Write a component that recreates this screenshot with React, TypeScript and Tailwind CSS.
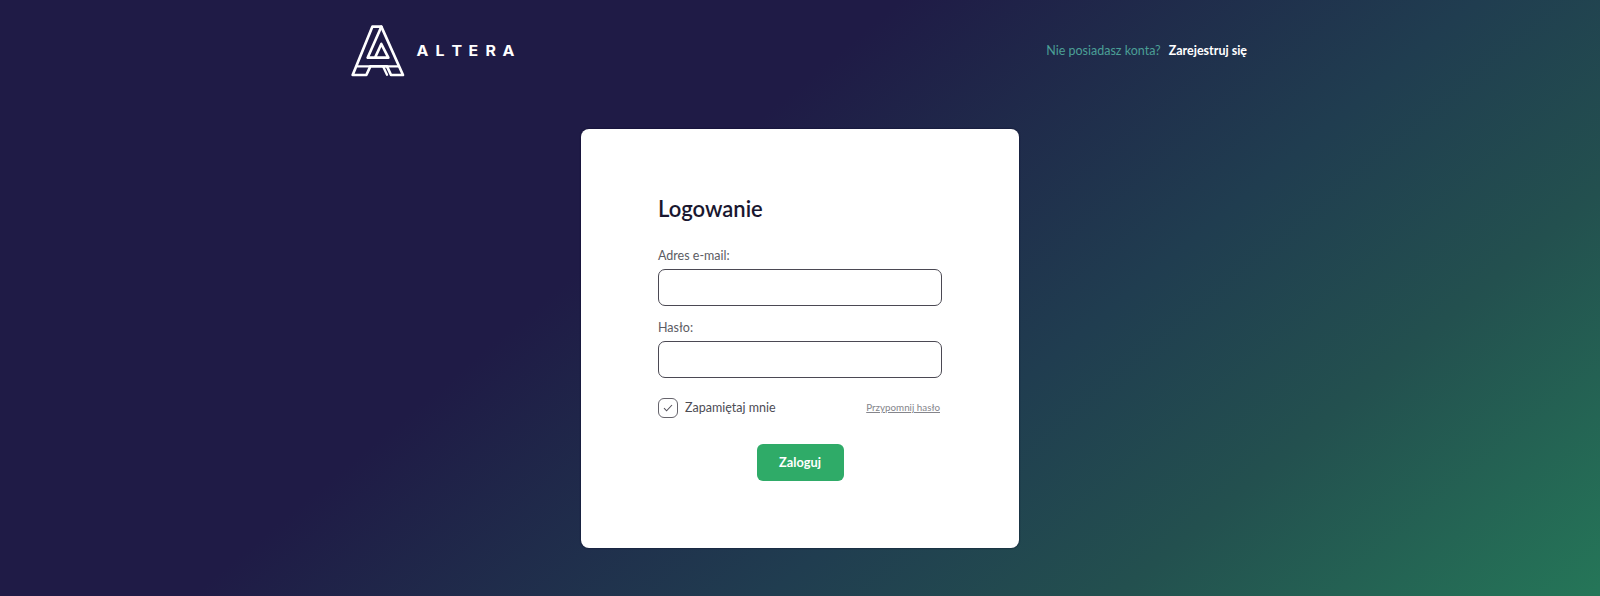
import { useState } from 'react';

function Logo() {
  return (
    <div className="flex items-center gap-3">
      <svg width="54" height="52" viewBox="16 14 162 156" fill="none" stroke="#fff" strokeWidth="8" strokeLinejoin="round" strokeLinecap="round">
        <path d="M80 19H107L172 164H136L124 138H74L62 164H21Z" />
        <path d="M107 19L66 112H128L107 71L89 110" />
        <path d="M74 138H36M112 138L124 163M124 138H158" strokeWidth="7" />
      </svg>
      <span className="flex w-[97px] justify-between font-['Inter','Lato',sans-serif] text-[14.5px] leading-5 font-bold text-white">
        {'ALTERA'.split('').map((letter, i) => (
          <span key={i} className="inline-block scale-x-110">{letter}</span>
        ))}
      </span>
    </div>
  );
}

function Field({ label, type }: { label: string; type: string }) {
  return (
    <label className="block h-[72px] text-[12.5px] leading-[18px] text-[#5c5c63]">
      <span className="block pt-px">{label}</span>
      <input type={type} className="mt-1 block h-[37px] w-full rounded-[7px] border border-[#4b4953] bg-white px-3 outline-none" />
    </label>
  );
}

export default function App() {
  const [remember, setRemember] = useState(true);
  return (
    <div className="flex h-[596px] w-full flex-col bg-[linear-gradient(140deg,#1f1b46_0%,#1f1b46_39%,#203d50_64%,#23504f_79%,#257658_100%)] font-['Lato','Open_Sans',sans-serif]">
      <header className="mx-auto flex h-[102px] w-[898px] items-center justify-between pr-[2px]">
        <Logo />
        <p className="flex gap-2 text-[12.5px]">
          <span className="text-[#4b9f96]">Nie posiadasz konta?</span>
          <a className="font-bold text-white">Zarejestruj się</a>
        </p>
      </header>
      <main className="mx-auto mt-[27px] flex h-[419px] w-[438px] flex-col rounded-lg bg-white px-[77px] pt-[63px] shadow-[0_0_2px_#0a0a28]">
        <h1 className="text-[22px] leading-[33px] font-semibold text-[#19172f]">Logowanie</h1>
        <form className="mt-[21px] flex flex-col">
          <Field label="Adres e-mail:" type="email" />
          <Field label="Hasło:" type="password" />
          <div className="mt-2 flex h-5 items-center justify-between">
            <label className="flex items-center gap-[7px] text-[12.5px] text-[#4c4c54]">
              <input type="checkbox" className="sr-only" checked={remember} onChange={() => setRemember(!remember)} />
              <span className="flex h-5 w-5 items-center justify-center rounded-[6px] border border-[#66646c]">
                {remember && (
                  <svg width="10" height="8" viewBox="0 0 10 8" fill="none" stroke="#55535c" strokeWidth="1.1">
                    <path d="M1 4.200L3.600 6.800L9 1" />
                  </svg>
                )}
              </span>
              Zapamiętaj mnie
            </label>
            <a className="mr-[2px] pb-px text-[9.8px] text-[#85858b] underline">Przypomnij hasło</a>
          </div>
          <button type="button" className="mt-[26px] h-[37px] w-[87px] self-center rounded-md bg-[#2fab68] text-[12.8px] font-bold text-white">
            Zaloguj
          </button>
        </form>
      </main>
    </div>
  );
}
